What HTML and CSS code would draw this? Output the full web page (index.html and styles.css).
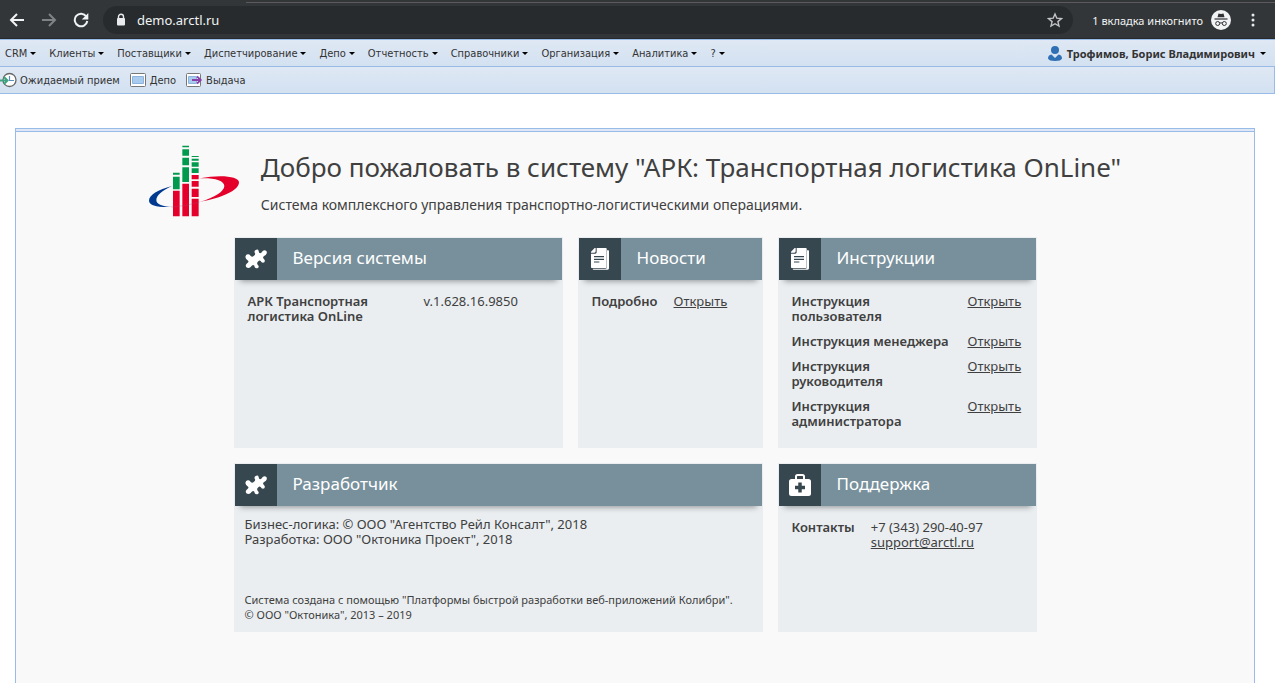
FILE: index.html
```html
<!DOCTYPE html>
<html lang="ru">
<head>
<meta charset="utf-8">
<title>АРК: Транспортная логистика OnLine</title>
<link rel="stylesheet" href="styles.css">
</head>
<body>
<svg class="sprite" aria-hidden="true">
  <symbol id="puzzle" viewBox="27 27 72 72"><path d="M62 36Q69 32 71 39 71 46 76 46 80 45 83 39 89 34 94 39 98 45 92 51 84 55 84 59 86 62 89 66 91 73 84 74 79 74 77 69 73 66 70 70 64 75 68 80 74 85 69 90 62 93 59 87 59 81 54 81 50 82 47 87 41 92 34 88 30 82 35 77 42 73 40 69 32 64 31 57 32 48 40 49 45 50 47 54 52 58 56 54 62 50 60 46 56 40 62 36Z"/></symbol>
  <symbol id="papers" viewBox="27 27 72 72"><path d="M84 37h4q2 0 2 2v52q0 4-4 4H44q-3 0-3-3h38q5 0 5-5z"/><path d="M53 30h28q2 0 2 2v56q0 2-2 2H38q-2 0-2-2V47h13q4 0 4-4zM50 30v10q0 4-4 4H36v-3l11-11z"/><path d="M45 56h30M45 64h30M45 72h16" stroke="#37474f" stroke-width="3.500"/></symbol>
</svg>

<header class="browser">
  <button class="nav" aria-label="Назад"><svg width="16" height="16" viewBox="0 0 16 16"><path d="M15 8H2M8 2 2 8l6 6"/></svg></button>
  <button class="nav nav-off" aria-label="Вперёд"><svg width="16" height="16" viewBox="0 0 16 16"><path d="M1 8h13M8 2l6 6-6 6"/></svg></button>
  <button class="nav" aria-label="Обновить"><svg width="16" height="16" viewBox="0 0 16 16"><path d="M13.300 4.500A6.300 6.300 0 1 0 14.300 9"/><path class="solid" d="M15.300 1v6.500H8.800z"/></svg></button>
  <div class="address">
    <svg width="10" height="14" viewBox="0 0 10 14"><path d="M2.500 6V3.800a2.500 2.500 0 0 1 5 0V6" fill="none" stroke="#e8eaed" stroke-width="1.400"/><rect x="1" y="5" width="8" height="7.500" rx="1" fill="#e8eaed"/></svg>
    <input class="url" type="text" value="demo.arctl.ru" aria-label="Адрес">
    <button class="star" aria-label="В закладки"><svg width="16" height="16" viewBox="0 0 16 16"><path d="m8 2 1.800 4.200 4.600.4-3.500 3 1.100 4.500L8 11.700l-4 2.400 1.100-4.500-3.500-3 4.600-.4z" fill="none" stroke="#c3c5c8" stroke-width="1.400"/></svg></button>
  </div>
  <span class="incognito">1 вкладка инкогнито</span>
  <svg width="20" height="20" viewBox="0 0 20 20"><circle cx="10" cy="10" r="10" fill="#f1f3f4"/><path d="M6.500 7.200 7.500 3.500l2.500.5 2.500-.5 1 3.700z" fill="#303236"/><path d="M3.500 9h13" stroke="#303236" stroke-width="1.200"/><g fill="none" stroke="#303236"><circle cx="6.700" cy="13.500" r="2"/><circle cx="13.300" cy="13.500" r="2"/><path d="M8.700 13.200q1.300-.8 2.600 0"/></g></svg>
  <button class="more" aria-label="Меню"><svg width="4" height="14" viewBox="0 0 4 14" fill="#e8eaed"><circle cx="2" cy="2" r="1.500"/><circle cx="2" cy="7" r="1.500"/><circle cx="2" cy="12" r="1.500"/></svg></button>
</header>

<nav class="bar menu">
  <button class="item drop">CRM</button>
  <button class="item drop">Клиенты</button>
  <button class="item drop">Поставщики</button>
  <button class="item drop">Диспетчирование</button>
  <button class="item drop">Депо</button>
  <button class="item drop">Отчетность</button>
  <button class="item drop">Справочники</button>
  <button class="item drop">Организация</button>
  <button class="item drop">Аналитика</button>
  <button class="item drop">?</button>
  <button class="item drop user"><svg width="14" height="15" viewBox="0 0 14 15" fill="#2f6fb3"><circle cx="7" cy="4" r="4"/><path d="M0 12.500Q0 9 3.500 8.500L7 12l3.500-3.500Q14 9 14 12.500 13 15 7 15t-7-2.500z"/></svg>Трофимов, Борис Владимирович</button>
</nav>
<div class="bar tools">
  <button class="item"><svg width="17" height="16" viewBox="0 0 17 16"><circle cx="9.500" cy="8" r="6.500" fill="#fff" stroke="#666" stroke-width="1.300"/><path d="M9.500 4v4.500H14" fill="none" stroke="#5b8fc0" stroke-width="1.200"/><path d="M0 8.500h7M4 5l3.500 3.500L4 12" fill="none" stroke="#3ea37e" stroke-width="2"/></svg>Ожидаемый прием</button>
  <button class="item"><svg width="17" height="14" viewBox="0 0 17 14"><rect x=".5" y=".5" width="15" height="13" rx="1" fill="#fff" stroke="#777"/><path d="M2.500 3.500h11v7h-11z" fill="#a9cbee" stroke="#8db4dc"/></svg>Депо</button>
  <button class="item"><svg width="17" height="14" viewBox="0 0 17 14"><rect x=".5" y=".5" width="14" height="13" rx="1" fill="#fff" stroke="#777"/><path d="M2.500 3.500h8v7h-8z" fill="#a9cbee" stroke="#8db4dc"/><path d="M6 7h9M11 3.500 14.800 7 11 10.500" fill="none" stroke="#8b3fa8" stroke-width="1.800"/></svg>Выдача</button>
</div>

<main class="panel">
  <div class="intro">
    <svg class="logo" width="90" height="72" viewBox="453 104 270 216" role="img" aria-label="АРК">
      <path fill="#00398f" d="M522 227C480 238 453 254 453 271c0 15 28 21 69 19-32-2-47-9-47-21 0-14 17-28 47-42z"/>
      <path fill="#e4002b" d="M605 204c60-12 118-7 118 12 0 24-50 47-118 59 46-14 74-32 74-48 0-17-32-25-74-23z"/>
      <path fill="#009a4e" d="M525 187h20v6h-20zM525 199h20v38h-20zM553 106h20v5h-20zM553 117h20v19h-20zM553 142h20v23h-20zM553 171h20v44h-20zM581 137h21v3h-21zM581 145h21v6h-21zM581 156h21v13h-21zM581 174h21v14h-21z"/>
      <path fill="#e4002b" d="M525 241h20v77h-20zM553 220h20v98h-20zM581 194h21v13h-21zM581 212h21v17h-21zM581 235h21v25h-21zM581 265h21v53h-21z"/>
      <path fill="none" stroke="#b0426a" d="M520 290q45-2 85-15"/>
    </svg>
    <div>
      <h1>Добро пожаловать в систему "АРК: Транспортная логистика OnLine"</h1>
      <p>Система комплексного управления транспортно-логистическими операциями.</p>
    </div>
  </div>

  <div class="cards">
    <section class="card">
      <h2><span class="badge"><svg width="24" height="24"><use href="#puzzle"/></svg></span>Версия системы</h2>
      <dl class="rows version"><dt>АРК Транспортная логистика OnLine</dt><dd>v.1.628.16.9850</dd></dl>
    </section>
    <section class="card">
      <h2><span class="badge"><svg width="24" height="24"><use href="#papers"/></svg></span>Новости</h2>
      <dl class="rows short"><dt>Подробно</dt><dd><a href="#">Открыть</a></dd></dl>
    </section>
    <section class="card">
      <h2><span class="badge"><svg width="24" height="24"><use href="#papers"/></svg></span>Инструкции</h2>
      <dl class="rows version">
        <dt>Инструкция пользователя</dt><dd><a href="#">Открыть</a></dd>
        <dt>Инструкция менеджера</dt><dd><a href="#">Открыть</a></dd>
        <dt>Инструкция руководителя</dt><dd><a href="#">Открыть</a></dd>
        <dt>Инструкция администратора</dt><dd><a href="#">Открыть</a></dd>
      </dl>
    </section>
    <section class="card wide">
      <h2><span class="badge"><svg width="24" height="24"><use href="#puzzle"/></svg></span>Разработчик</h2>
      <div class="about">
        <p>Бизнес-логика: © ООО "Агентство Рейл Консалт", 2018<br>Разработка: ООО "Октоника Проект", 2018</p>
        <p class="small">Система создана с помощью "Платформы быстрой разработки веб-приложений Колибри".<br>© ООО "Октоника", 2013 – 2019</p>
      </div>
    </section>
    <section class="card">
      <h2><span class="badge"><svg width="24" height="24" viewBox="0 0 24 24"><path d="M8 7V3.500Q8 2 9.500 2h5Q16 2 16 3.500V7" fill="none" stroke="#fff" stroke-width="2"/><rect x="1" y="6" width="22" height="17" rx="2.500"/><path d="M12 9.500v10M7 14.500h10" stroke="#37474f" stroke-width="3.500"/></svg></span>Поддержка</h2>
      <dl class="rows short"><dt>Контакты</dt><dd>+7 (343) 290-40-97<br><a href="mailto:support@arctl.ru">support@arctl.ru</a></dd></dl>
    </section>
  </div>
</main>
</body>
</html>
```
FILE: styles.css
```css
* { box-sizing: border-box; }
body {
  margin: 0;
  min-height: 100vh;
  display: flex;
  flex-direction: column;
  background: #fff;
  color: #404040;
  font: 13px/15px "Noto Sans", "Open Sans", sans-serif;
}
button { border: 0; padding: 0; background: none; font: inherit; color: inherit; }
h1, h2, p, dl, dd { margin: 0; font-weight: 400; }
a { color: inherit; }
.sprite { position: absolute; width: 0; height: 0; }

.browser {
  position: relative;
  display: flex;
  align-items: center;
  height: 39px;
  padding: 2px 20px 0 9px;
  background: #323639;
  border-bottom: 1px solid #27292b;
  color: #f1f3f4;
}
.browser::before {
  content: "";
  position: absolute;
  top: 0;
  left: 246px;
  right: 0;
  height: 2px;
  border-bottom: 1px solid #5d5a5b;
}
.nav { display: flex; margin-right: 16px; }
.nav svg { fill: none; stroke: #f1f3f4; stroke-width: 2; }
.nav .solid { fill: #f1f3f4; stroke: none; }
.nav-off svg { stroke: #808386; }
.address {
  flex: 1;
  display: flex;
  align-items: center;
  gap: 11px;
  height: 28px;
  margin-right: 19px;
  padding: 0 10px 0 13px;
  border-radius: 14px;
  background: #282b2e;
}
.nav + .address { margin-left: -2px; }
.url { flex: 1; min-width: 0; border: 0; padding: 0; background: none; color: #f1f3f4; font: 13px "Noto Sans", sans-serif; }
.star { display: flex; }
.incognito { margin-right: 8px; font-size: 11px; }
.more { display: flex; margin-left: 20px; }

.bar {
  display: flex;
  align-items: center;
  height: 27px;
  border-bottom: 1px solid #99bbe8;
  background: linear-gradient(#dfe8f4, #d3e1f1);
  color: #333;
  font: 11px/15px "DejaVu Sans Condensed", Roboto, sans-serif;
}
.menu { gap: 13px; padding: 0 9px 0 5px; border-top: 1px solid #99bbe8; height: 28px; }
.tools { gap: 10px; border-right: 1px solid #99bbe8; }
.item { display: flex; align-items: center; gap: 3px; white-space: nowrap; }
.drop::after { content: ""; border: 3px solid transparent; border-top-color: #000; border-bottom: 0; }
.user { margin-left: auto; font: 700 11px/15px "Noto Sans", sans-serif; gap: 5px; }

.panel {
  flex: 1;
  margin: 34px 20px 0 15px;
  padding: 12px 0 16px;
  border: 1px solid #99bbe8;
  border-bottom: 0;
  background: linear-gradient(#dfe8f6 0 2px, #99bbe8 2px 3px, #f9f9f9 3px);
}
.intro { display: flex; justify-content: center; gap: 22px; margin: 4px 0 20px; }
.intro h1 { margin: 5px 0 11px; font-size: 26px; line-height: 34px; }
.intro p { font-size: 14px; line-height: 20px; }

.cards { display: grid; grid-template-columns: 329px 185px 259px; grid-template-rows: 211px 169px; gap: 15px; justify-content: center; }
.card { display: flex; flex-direction: column; padding: 1px; background: #eaeef1; }
.wide { grid-column: span 2; }
.card h2 {
  display: flex;
  gap: 16px;
  background: #78909c;
  color: #fff;
  font-size: 17px;
  line-height: 40px;
  box-shadow: 0 6px 6px -5px rgba(0, 0, 0, 0.4);
}
.badge { display: grid; place-items: center; width: 42px; height: 42px; background: #37474f; fill: #fff; }
.rows { display: grid; gap: 10px 16px; padding: 14px 13px; }
.rows dt { font-weight: 600; }
.version { grid-template-columns: 160px 1fr; }
.short { grid-template-columns: auto 1fr; }
.about { flex: 1; display: flex; flex-direction: column; justify-content: space-between; padding: 11px 4px 9px 10px; }
.small { font-size: 11px; }
```
